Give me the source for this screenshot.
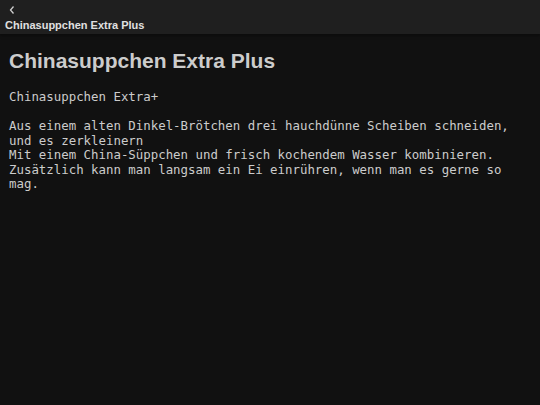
export default function App() {
  return (
    <div className="h-[405px] w-[540px] overflow-hidden bg-[#111111] font-['Liberation_Sans',Arial,sans-serif]">
      <div className="h-[34px] bg-[#1f1f1f] px-[5px] pt-[3px] shadow-[0_2px_3px_rgba(0,0,0,0.35)]">
        <div className="h-[13px] text-[11px] leading-[13px] text-[#cfcfcf]">
          <svg width="8" height="10" viewBox="0 0 8 10" className="ml-[3px] mt-[2px]">
            <path d="M5.5 1.5 L2.5 5 L5.5 8.5" stroke="#cfcfcf" strokeWidth="1.3" fill="none" />
          </svg>
        </div>
        <div className="text-[11px] font-bold leading-[14px] text-[#e0e0e0]">Chinasuppchen Extra Plus</div>
      </div>
      <div className="px-[9px] pt-[14px]">
        <h1 className="text-[21px] font-bold leading-[26px] text-[#cccccc]">Chinasuppchen Extra Plus</h1>
        <div className="mt-[16px] whitespace-pre-wrap font-['DejaVu_Sans_Mono',monospace] text-[12.4px] leading-[14.5px] text-[#cccccc]">
          {"Chinasuppchen Extra+\n\nAus einem alten Dinkel-Brötchen drei hauchdünne Scheiben schneiden,\nund es zerkleinern\nMit einem China-Süppchen und frisch kochendem Wasser kombinieren.\nZusätzlich kann man langsam ein Ei einrühren, wenn man es gerne so\nmag."}
        </div>
      </div>
    </div>
  )
}
